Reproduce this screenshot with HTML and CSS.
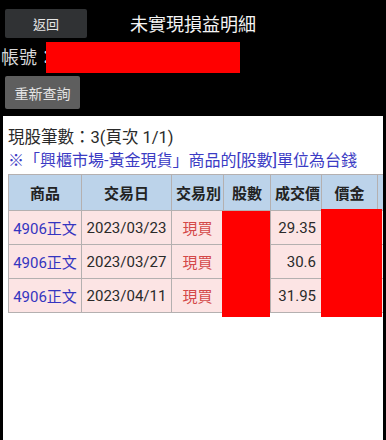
FILE: index.html
```html
<!DOCTYPE html>
<html lang="zh-Hant">
<head>
<meta charset="utf-8">
<title>未實現損益明細</title>
<link rel="stylesheet" href="styles.css">
</head>
<body>
<div class="page">
  <header class="top">
    <div class="bar">
      <div class="bar-left"><button class="btn btn-back">返回</button></div>
      <h1 class="title">未實現損益明細</h1>
      <div class="bar-right"></div>
    </div>
    <div class="acct">
      <span class="acct-label">帳號：</span>
      <span class="acct-box"></span>
    </div>
    <div class="actions">
      <button class="btn btn-requery">重新查詢</button>
    </div>
  </header>
  <main class="content">
    <p class="count">現股筆數：3(頁次 1/1)</p>
    <p class="note">※「興櫃市場-黃金現貨」商品的[股數]單位為台錢</p>
    <div class="table-wrap">
      <table class="grid">
        <colgroup>
          <col class="c-prod">
          <col class="c-date">
          <col class="c-type">
          <col class="c-qty">
          <col class="c-price">
          <col class="c-amt">
          <col class="c-fee">
        </colgroup>
        <thead>
          <tr>
            <th>商品</th>
            <th>交易日</th>
            <th>交易別</th>
            <th>股數</th>
            <th>成交價</th>
            <th>價金</th>
            <th>手續費</th>
          </tr>
        </thead>
        <tbody>
          <tr>
            <td class="prod">4906正文</td>
            <td class="date">2023/03/23</td>
            <td class="type">現買</td>
            <td class="num"></td>
            <td class="num">29.35</td>
            <td class="num"></td>
            <td class="num"></td>
          </tr>
          <tr>
            <td class="prod">4906正文</td>
            <td class="date">2023/03/27</td>
            <td class="type">現買</td>
            <td class="num"></td>
            <td class="num">30.6</td>
            <td class="num"></td>
            <td class="num"></td>
          </tr>
          <tr>
            <td class="prod">4906正文</td>
            <td class="date">2023/04/11</td>
            <td class="type">現買</td>
            <td class="num"></td>
            <td class="num">31.95</td>
            <td class="num"></td>
            <td class="num"></td>
          </tr>
        </tbody>
      </table>
      <div class="redact redact-qty"></div>
      <div class="redact redact-amt"></div>
    </div>
  </main>
</div>
</body>
</html>
```

FILE: styles.css
```css
* { box-sizing: border-box; }

html, body {
  margin: 0;
  padding: 0;
  background: #000;
  height: 100%;
}

body {
  font-family: Roboto, "Noto Sans CJK TC", "Noto Sans", sans-serif;
  color: #222;
}

.page {
  width: 386px;
  height: 440px;
  display: flex;
  flex-direction: column;
  overflow: hidden;
}

/* ---------- header ---------- */
.top {
  background: #000;
  color: #fff;
  padding: 7px 0 7px 0;
  display: flex;
  flex-direction: column;
}

.bar {
  display: grid;
  grid-template-columns: 1fr auto 1fr;
  align-items: center;
  height: 29px;
}

.bar-left {
  padding-left: 5px;
}

.btn {
  border: none;
  margin: 0;
  padding: 0;
  font-family: Roboto, "Noto Sans CJK TC", sans-serif;
  border-radius: 2px;
  display: flex;
  align-items: center;
  justify-content: center;
}

.btn-back {
  width: 82px;
  height: 29px;
  background: #303234;
  color: #e6e6e6;
  font-size: 13px;
}

.title {
  margin: 0;
  font-size: 18px;
  font-weight: 400;
  color: #f4f4f4;
  line-height: 29px;
  padding-top: 3px;
}

.acct {
  display: flex;
  align-items: center;
  margin-top: 6px;
  height: 31px;
}

.acct-label {
  font-size: 18px;
  color: #d8d8d8;
  line-height: 31px;
  white-space: nowrap;
  padding-left: 1px;
}

.acct-box {
  display: block;
  width: 194px;
  height: 31px;
  margin-left: -9px;
  background: #ff0000;
  position: relative;
}

.actions {
  margin-top: 3px;
  padding-left: 5px;
}

.btn-requery {
  width: 75px;
  height: 33px;
  background: #5e5e5e;
  color: #e4e4e4;
  font-size: 14px;
}

/* ---------- content ---------- */
.content {
  flex: 1;
  background: #fff;
  margin: 0 3px 0 3px;
  padding: 11px 0 0 5px;
  overflow: hidden;
}

.count {
  margin: 0;
  font-size: 16.5px;
  line-height: 22px;
  color: #2a2a2a;
}

.note {
  margin: 1px 0 0 0;
  font-size: 16px;
  line-height: 22px;
  color: #3b3bc4;
  white-space: nowrap;
}

.table-wrap {
  position: relative;
  margin-top: 2px;
  width: 430px;
}

.grid {
  border-collapse: collapse;
  table-layout: fixed;
  width: 430px;
  font-size: 15px;
}

.grid th,
.grid td {
  border: 1px solid #b4b0b0;
  padding: 0 4px;
  white-space: nowrap;
  overflow: hidden;
}

.grid th {
  background: #bcd3ea;
  color: #222;
  font-weight: 700;
  height: 36px;
  text-align: center;
}

.grid td {
  background: #fce4e4;
  height: 34px;
  color: #2a2a2a;
}

.c-prod  { width: 73px; }
.c-date  { width: 90px; }
.c-type  { width: 52px; }
.c-qty   { width: 47px; }
.c-price { width: 51px; }
.c-amt   { width: 56px; }
.c-fee   { width: 61px; }

.grid td.prod {
  color: #3535c0;
  padding: 0 1px;
  text-align: center;
}

.grid td.date {
  text-align: center;
}

.grid td.type {
  color: #d44848;
  text-align: center;
}

.grid td.num {
  text-align: right;
  padding-right: 5px;
}

.redact {
  position: absolute;
  background: #ff0000;
}

.redact-qty {
  left: 214px;
  top: 37px;
  width: 48px;
  height: 106px;
}

.redact-amt {
  left: 313px;
  top: 35px;
  width: 61px;
  height: 108px;
}
```
